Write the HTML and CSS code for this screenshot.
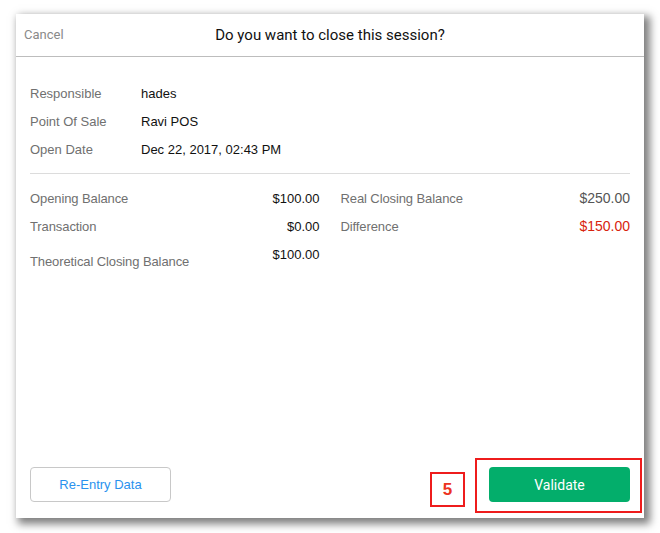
FILE: index.html
```html
<!DOCTYPE html>
<html>
<head>
<meta charset="utf-8">
<link rel="stylesheet" href="styles.css">
</head>
<body>
<div class="panel">
  <div class="header">
    <span class="cancel">Cancel</span>
    <span class="title">Do you want to close this session?</span>
  </div>
  <div class="body">
    <div class="info">
      <div class="irow"><span class="ilabel">Responsible</span><span class="ivalue">hades</span></div>
      <div class="irow"><span class="ilabel">Point Of Sale</span><span class="ivalue">Ravi POS</span></div>
      <div class="irow"><span class="ilabel">Open Date</span><span class="ivalue">Dec 22, 2017, 02:43 PM</span></div>
    </div>
    <div class="divider"></div>
    <div class="balances">
      <div class="col">
        <div class="brow"><span class="blabel">Opening Balance</span><span class="bvalue">$100.00</span></div>
        <div class="brow"><span class="blabel">Transaction</span><span class="bvalue">$0.00</span></div>
        <div class="brow tall"><span class="blabel">Theoretical Closing Balance</span><span class="bvalue">$100.00</span></div>
      </div>
      <div class="col">
        <div class="brow"><span class="blabel">Real Closing Balance</span><span class="bvalue big">$250.00</span></div>
        <div class="brow"><span class="blabel">Difference</span><span class="bvalue big red">$150.00</span></div>
      </div>
    </div>
    <div class="footer">
      <button class="btn reentry">Re-Entry Data</button>
      <button class="btn validate">Validate</button>
    </div>
  </div>
</div>
<div class="mark-box"></div>
<div class="mark-num">5</div>
</body>
</html>
```
FILE: styles.css
```css
html, body { margin: 0; padding: 0; background: #fff; }
body { width: 660px; height: 533px; position: relative; overflow: hidden; font-family: "Liberation Sans", Arial, sans-serif; }
.panel {
  position: absolute; left: 16px; top: 14px; width: 628px; height: 504px;
  background: #fff; box-shadow: 4px 4px 8px 2px rgba(0,0,0,0.5);
  display: flex; flex-direction: column;
}
.header {
  height: 42px; border-bottom: 1px solid #bdbdbd; position: relative;
  display: flex; align-items: center; justify-content: center;
  font-family: Roboto, sans-serif;
}
.cancel { position: absolute; left: 8px; top: 13px; font-size: 13px; color: #8a8a8a; }
.title { font-size: 15px; color: #111; }
.body { flex: 1; display: flex; flex-direction: column; padding: 22px 14px 16px 14px; }
.irow { height: 28px; display: flex; align-items: center; font-size: 13px; }
.ilabel { width: 111px; color: #707070; }
.ivalue { color: #111; }
.divider { height: 1px; background: #dcdcdc; margin: 10px 0 10px 0; }
.balances { display: flex; gap: 21px; }
.col { flex: 1; }
.brow { height: 28px; display: flex; align-items: center; justify-content: space-between; font-size: 13px; }
.brow.tall { height: 42px; align-items: flex-start; }
.brow.tall .blabel { margin-top: 14px; }
.brow.tall .bvalue { margin-top: 7px; }
.blabel { color: #707070; letter-spacing: -0.1px; }
.bvalue { color: #111; }
.bvalue.big { font-size: 14px; color: #555; }
.bvalue.red { color: #d8230e; }
.footer { margin-top: auto; display: flex; justify-content: space-between; }
.btn { width: 141px; height: 35px; border-radius: 4px; font-family: "Liberation Sans", Arial, sans-serif; font-size: 13px; cursor: pointer; }
.reentry { background: #fff; border: 1px solid #c8c8c8; color: #2a92ee; }
.validate { background: #03ae6b; border: none; color: #fff; font-family: Roboto, sans-serif; font-size: 14px; }
.mark-box { position: absolute; left: 475px; top: 458px; width: 163px; height: 51px; border: 2px solid #ee1c1c; }
.mark-num { position: absolute; left: 430px; top: 472px; width: 31px; height: 31px; border: 2px solid #ee1c1c;
  display: flex; align-items: center; justify-content: center; color: #ec3320; font-weight: bold; font-size: 17px; font-family: "Liberation Sans", Arial, sans-serif; }
```
